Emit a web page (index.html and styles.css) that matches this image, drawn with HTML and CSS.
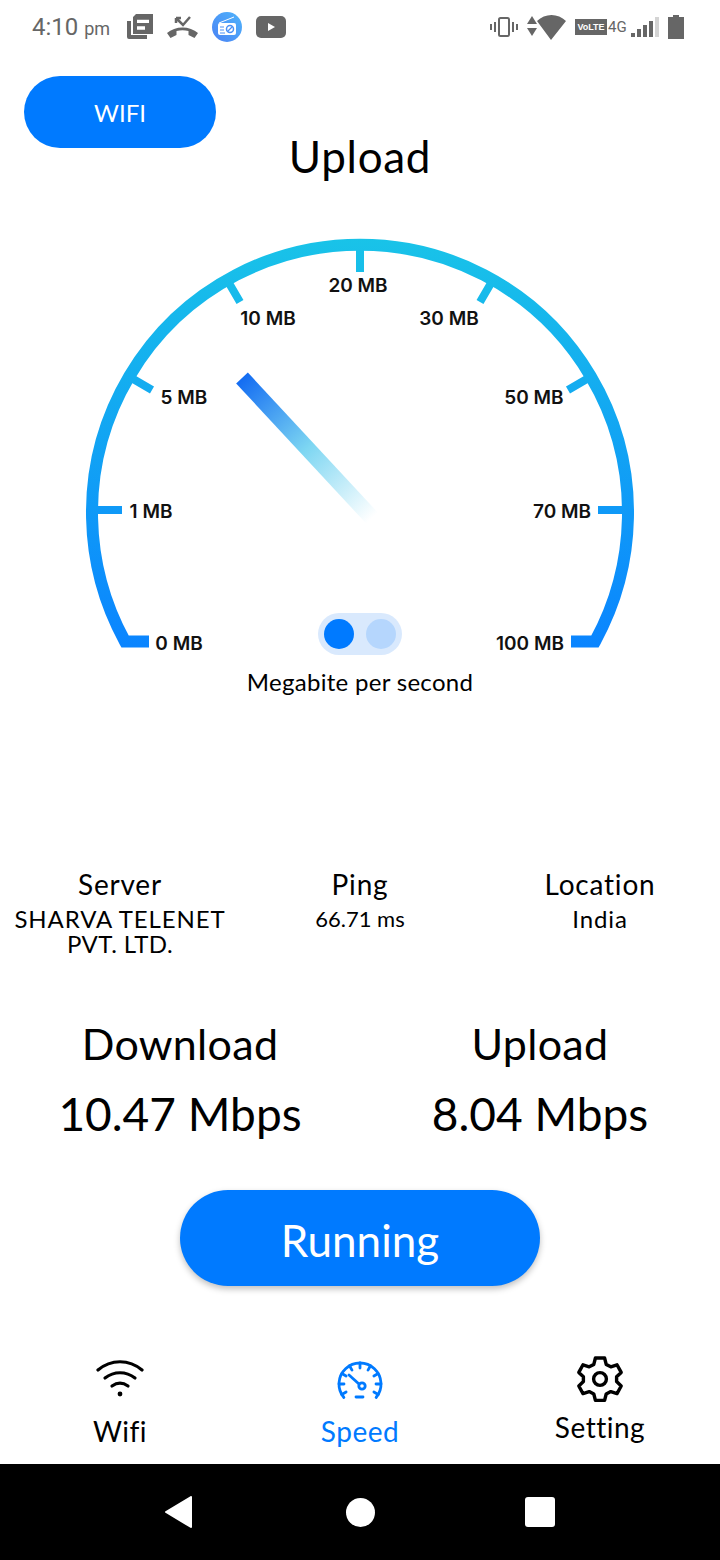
FILE: index.html
```html
<!DOCTYPE html>
<html lang="en">
<head>
  <meta charset="UTF-8" />
  <meta name="viewport" content="width=device-width, initial-scale=1.0" />
  <title>Speed Test</title>
  <link rel="stylesheet" href="styles.css">
</head>
<body>
  <div class="app">
    <div class="statusbar">
      <div class="status-left">
        <div class="time">4:10 <small>pm</small></div>
        <svg width="26" height="26" viewBox="0 0 26 26">
          <path class="fill" fill-rule="evenodd" d="M9 0h17v20H6V3zM10 5.700V9h12V5.700zM10 12.300v3.400h8v-3.400z"/>
          <path class="fill" d="M0 7h4v14h16v4H2a2 2 0 0 1-2-2z"/>
        </svg>
        <svg width="31" height="22" viewBox="0 0 31 22">
          <path class="fill" d="M0 17c8-7.500 23-7.500 31 0l-3.500 5-6-3v-4c-4-1-8-1-12 0v4l-6 3z"/>
          <path class="line" d="M9 2l7 7 7-8M9 2v5M9 2h5" />
        </svg>
        <svg width="30" height="30" viewBox="0 0 30 30">
          <defs>
            <linearGradient id="radioBg" x1="0" y1="1" x2="1" y2="0">
              <stop offset="0" stop-color="#4a82f4"/>
              <stop offset="1" stop-color="#4fb4fb"/>
            </linearGradient>
          </defs>
          <circle cx="15" cy="15" r="15" fill="url(#radioBg)"/>
          <path d="M7 11L22 5" stroke="#fff" stroke-width="1"/>
          <rect x="6" y="11" width="18" height="12" rx="2" fill="#fff"/>
          <circle cx="18" cy="17" r="3.500" fill="none" stroke="#4a90f6" stroke-width="1.500"/>
          <path d="M15.500 19.500l5-5" stroke="#4a90f6" stroke-width="1.200"/>
          <path d="M8 15h4M8 18h4M8 21h5" stroke="#4a90f6" stroke-width="1"/>
        </svg>
        <svg width="30" height="22" viewBox="0 0 30 22">
          <rect width="30" height="22" rx="5" class="fill"/>
          <path d="M12 7l7 4-7 4z" fill="#fff"/>
        </svg>
      </div>
      <div class="status-right">
        <svg width="28" height="20" viewBox="0 0 28 20">
          <rect x="9" y="1" width="10" height="18" rx="1.500" fill="none" stroke="#666" stroke-width="2"/>
          <path class="fill" d="M4 5h2v10H4zM22 5h2v10h-2zM0 7h2v6H0zM26 7h2v6h-2z"/>
        </svg>
        <svg width="39" height="25" viewBox="0 0 39 25">
          <path class="fill" d="M5 1l5 8H0zM5 21l5-8H0zM10 6c8-8 21-8 29 0L24 25z"/>
        </svg>
        <div class="volte"><span class="volte-box">VoLTE</span><span class="volte-4g">4G</span></div>
        <svg width="28" height="20" viewBox="0 0 28 20">
          <path class="fill" d="M0 16h4v4H0zM6 12h4v8H6zM12 8h4v12h-4zM18 4h4v16h-4z"/>
          <path fill="#d4d4d4" d="M24 0h4v20h-4z"/>
        </svg>
        <svg width="16" height="24" viewBox="0 0 16 24">
          <path class="fill" d="M5 0h6v2h5v22H0V2h5z"/>
        </svg>
      </div>
    </div>

    <div class="top">
      <button class="wifi-btn">WIFI</button>
      <h1 class="title">Upload</h1>
    </div>

    <svg class="gauge" width="720" height="440" viewBox="0 230 720 440">
      <defs>
        <linearGradient id="arcGrad" gradientUnits="userSpaceOnUse" x1="0" y1="238" x2="0" y2="650">
          <stop offset="0" stop-color="#19c3e8"/>
          <stop offset="1" stop-color="#0a84ff"/>
        </linearGradient>
        <linearGradient id="needleGrad" gradientUnits="userSpaceOnUse" x1="242" y1="378" x2="372" y2="518">
          <stop offset="0" stop-color="#136cf2"/>
          <stop offset="0.5" stop-color="#7dd6f2"/>
          <stop offset="1" stop-color="#ffffff"/>
        </linearGradient>
      </defs>
      <path class="arc" d="M149 641.500H125A268 268 0 1 1 595 641.500H571"/>
      <path class="tick" d="M360 244V272M226 278L240 302M128 376L152 390M92 510H122M628 510H598M592 376L568 390M494 278L480 302"/>
      <line x1="242" y1="378" x2="372" y2="518" stroke="url(#needleGrad)" stroke-width="16"/>
      <text class="mark" x="179" y="650" text-anchor="middle">0 MB</text>
      <text class="mark" x="151" y="518" text-anchor="middle">1 MB</text>
      <text class="mark" x="184" y="404" text-anchor="middle">5 MB</text>
      <text class="mark" x="268" y="325" text-anchor="middle">10 MB</text>
      <text class="mark" x="358" y="292" text-anchor="middle">20 MB</text>
      <text class="mark" x="449" y="325" text-anchor="middle">30 MB</text>
      <text class="mark" x="534" y="404" text-anchor="middle">50 MB</text>
      <text class="mark" x="562" y="518" text-anchor="middle">70 MB</text>
      <text class="mark" x="530" y="650" text-anchor="middle">100 MB</text>
      <rect x="318" y="613" width="84" height="42" rx="21" fill="#d9e9fd"/>
      <circle cx="339" cy="634" r="15" fill="#007aff"/>
      <circle cx="381" cy="634" r="15" fill="#b5d6fd"/>
    </svg>

    <div class="unit">Megabite per second</div>

    <div class="stats">
      <div class="stat">
        <div class="stat-name">Server</div>
        <div class="stat-value">SHARVA TELENET<br><span class="tight">PVT. LTD.</span></div>
      </div>
      <div class="stat">
        <div class="stat-name">Ping</div>
        <div class="stat-value ping">66.71 ms</div>
      </div>
      <div class="stat">
        <div class="stat-name">Location</div>
        <div class="stat-value">India</div>
      </div>
    </div>

    <div class="results">
      <div class="result">
        <div class="result-name">Download</div>
        <div class="result-value">10.47 Mbps</div>
      </div>
      <div class="result">
        <div class="result-name">Upload</div>
        <div class="result-value">8.04 Mbps</div>
      </div>
    </div>

    <button class="run-btn">Running</button>

    <div class="tabs">
      <div class="tab">
        <svg width="48" height="48" viewBox="0 0 48 48" class="tab-icon">
          <g fill="none" stroke="#000" stroke-width="3.200" stroke-linecap="round">
            <path d="M2 15c13-11 31-11 44 0"/>
            <path d="M9 23c9-7 21-7 30 0"/>
            <path d="M16 31c5-3.500 11-3.500 16 0"/>
          </g>
          <circle cx="24" cy="39" r="2.400"/>
        </svg>
        <span>Wifi</span>
      </div>
      <div class="tab active">
        <svg width="48" height="48" viewBox="0 0 48 48" class="tab-icon">
          <g transform="translate(0 3)" fill="none" stroke="#007aff" stroke-width="2.800" stroke-linecap="round">
            <path d="M7.900 39.500A21 21 0 1 1 40.100 39.500"/>
            <path d="M24 5v5M13.500 7.800l2.500 4.300M34.500 7.800l-2.500 4.300M5.800 15.500l4.300 2.500M42.200 15.500l-4.300 2.500M3 26h5M45 26h-5M5.800 36.500l4.300-2.500M42.200 36.500l-4.300-2.500"/>
            <path d="M20 39h7"/>
            <path d="M13 17l10 9"/>
            <circle cx="26" cy="28" r="3.200"/>
          </g>
        </svg>
        <span>Speed</span>
      </div>
      <div class="tab setting">
        <svg width="48" height="48" viewBox="0 0 24 24" class="tab-icon">
          <g fill="none" stroke="#000" stroke-width="1.700" stroke-linejoin="round">
            <circle cx="12" cy="12" r="3.200"/>
            <path d="M9.700 1.500h4.600l.8 3.200 2.300 1.200 3.100-1 2.100 3.800-2.300 2.200v2.400l2.300 2.200-2.100 3.800-3.100-1-2.300 1.200-.8 3.200H9.700l-.8-3.200-2.300-1.200-3.100 1-2.100-3.800 2.300-2.200v-2.400L1.400 8.700l2.100-3.800 3.100 1 2.300-1.200z"/>
          </g>
        </svg>
        <span>Setting</span>
      </div>
    </div>

    <div class="navbar">
      <svg class="nav-back" width="28" height="32" viewBox="0 0 28 32"><path d="M27 1v30L2 16z" fill="#fff" stroke="#fff" stroke-width="2" stroke-linejoin="round"/></svg>
      <div class="nav-home"></div>
      <div class="nav-square"></div>
    </div>
  </div>
</body>
</html>
```

FILE: styles.css
```css
* { box-sizing: border-box; }
html, body {
  margin: 0;
  background: #fff;
}
.app {
  width: 720px;
  height: 1560px;
  display: flex;
  flex-direction: column;
  font-family: Lato, "Open Sans", sans-serif;
  color: #000;
  overflow: hidden;
}
.fill { fill: #666; }
.line {
  fill: none;
  stroke: #666;
  stroke-width: 2.500;
}

/* status bar */
.statusbar {
  height: 52px;
  padding: 2px 36px 0 32px;
  display: flex;
  justify-content: space-between;
  align-items: center;
}
.status-left, .status-right {
  display: flex;
  align-items: center;
}
.status-left { gap: 14px; }
.status-right { gap: 9px; }
.time {
  width: 81px;
  font-family: Roboto, sans-serif;
  font-size: 24px;
  color: #666;
}
.time small { font-size: 18px; }
.volte {
  width: 52px;
  margin-right: -5px;
  display: flex;
  align-items: center;
  gap: 1px;
}
.volte-box {
  width: 32px;
  height: 16px;
  background: #666;
  color: #fff;
  font: 700 9px/16px "Liberation Sans", sans-serif;
  text-align: center;
}
.volte-4g {
  font: 15px Roboto, sans-serif;
  color: #666;
}

/* heading */
.top {
  padding: 24px 24px 0;
}
.wifi-btn {
  display: block;
  width: 192px;
  height: 72px;
  border: none;
  border-radius: 36px;
  background: #007aff;
  color: #fff;
  font-family: inherit;
  font-size: 24px;
}
.title {
  margin: -15px 0 0;
  font-size: 44px;
  line-height: 46px;
  font-weight: 400;
  text-align: center;
  letter-spacing: 0.7px;
}

/* gauge */
.gauge {
  display: block;
  margin-top: 51px;
  flex: none;
}
.arc {
  fill: none;
  stroke: url(#arcGrad);
  stroke-width: 12px;
}
.tick {
  fill: none;
  stroke: url(#arcGrad);
  stroke-width: 8px;
}
.mark {
  font-family: Inter, sans-serif;
  font-size: 19px;
  font-weight: 600;
  fill: #111;
}
.unit {
  margin-top: -3px;
  font-size: 24px;
  line-height: 30px;
  text-align: center;
  letter-spacing: 0.3px;
}

/* server info */
.stats {
  margin-top: 169px;
  display: grid;
  grid-template-columns: repeat(3, 240px);
  text-align: center;
}
.stat-name {
  font-size: 28px;
  line-height: 36px;
  letter-spacing: 0.8px;
}
.stat-value {
  margin-top: 4px;
  font-size: 24px;
  line-height: 25px;
  letter-spacing: 0.9px;
}
.stat-value .tight { letter-spacing: 0.4px; }
.stat-value.ping {
  font-size: 22px;
  letter-spacing: 0;
}

/* results */
.results {
  margin-top: 58px;
  display: grid;
  grid-template-columns: repeat(2, 360px);
  text-align: center;
}
.result-name {
  font-size: 43px;
  line-height: 60px;
  letter-spacing: 0.3px;
}
.result-value {
  margin-top: 10px;
  font-size: 46px;
  line-height: 60px;
}

.run-btn {
  display: block;
  flex: none;
  width: 360px;
  height: 96px;
  margin: 46px auto 0;
  padding-top: 4px;
  border: none;
  border-radius: 48px;
  background: #007aff;
  color: #fff;
  font-family: inherit;
  font-size: 44px;
  box-shadow: 0 3px 6px rgba(0, 0, 0, 0.25);
}

/* bottom tabs */
.tabs {
  margin-top: auto;
  display: grid;
  grid-template-columns: repeat(3, 240px);
  text-align: center;
  font-size: 28px;
}
.tab {
  height: 120px;
  padding-top: 11px;
  display: flex;
  flex-direction: column;
  align-items: center;
}
.tab-icon { display: block; }
.tab span {
  margin-top: 11px;
  line-height: 34px;
  letter-spacing: 0.5px;
}
.tab.active { color: #007aff; }
.tab.setting span { margin-top: 7px; }

/* android nav */
.navbar {
  height: 96px;
  flex: none;
  background: #000;
  display: grid;
  grid-template-columns: repeat(3, 180px);
  padding: 0 90px;
  justify-items: center;
  align-items: center;
}
.nav-back { margin-right: 4px; }
.nav-home {
  width: 29px;
  height: 29px;
  border-radius: 50%;
  background: #fff;
}
.nav-square {
  width: 30px;
  height: 30px;
  border-radius: 3px;
  background: #fff;
}
```
